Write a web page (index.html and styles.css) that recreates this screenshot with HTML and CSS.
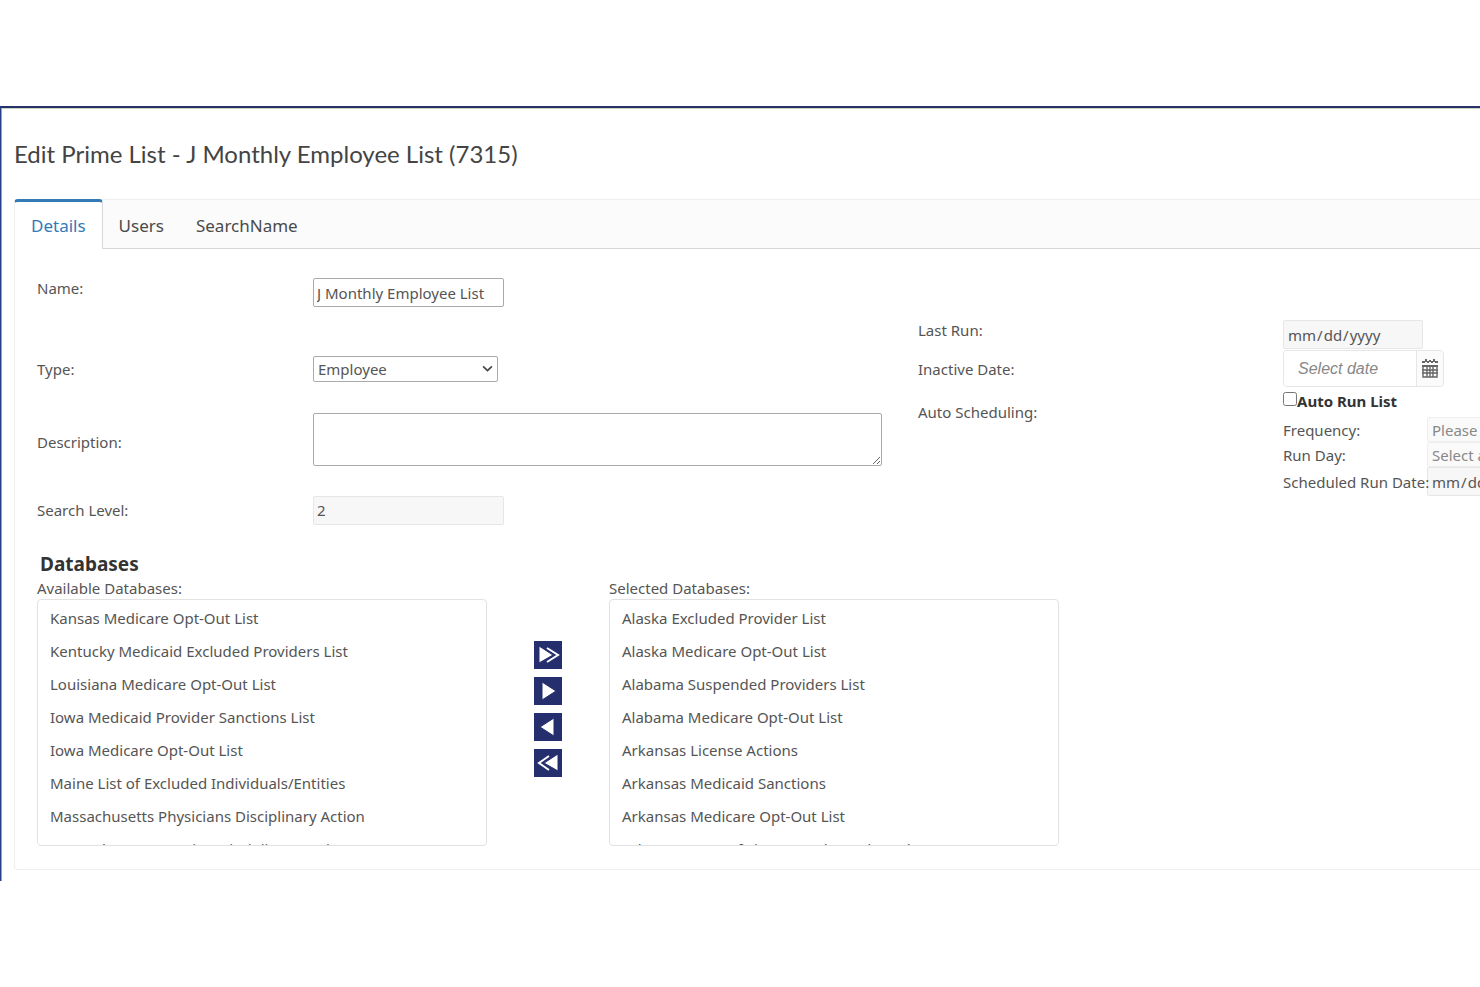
FILE: index.html
```
<!DOCTYPE html>
<html lang="en">
<head>
    <meta charset="UTF-8">
    <meta name="viewport" content="width=device-width, initial-scale=1.0">
    <title>Edit Prime List</title>
    <link rel="stylesheet" href="styles.css">
</head>
<body>

<main class="page">
    <h1>Edit Prime List - J Monthly Employee List (7315)</h1>

    <div class="panel">
        <nav class="tabs">
            <a href="#details" class="tab active">Details</a>
            <a href="#users" class="tab">Users</a>
            <a href="#searchname" class="tab">SearchName</a>
        </nav>

        <form class="details" id="details">
            <div class="form-columns">
                <!-- List details -->
                <div class="fields">
                    <label for="name">Name:</label>
                    <input type="text" id="name" class="field" value="J Monthly Employee List">

                    <label for="type">Type:</label>
                    <div class="select-wrap">
                        <select id="type">
                            <option>Employee</option>
                            <option>Vendor</option>
                        </select>
                        <svg class="chevron" viewBox="0 0 10 8"><path d="M1 2 L5 6 L9 2"/></svg>
                    </div>

                    <label for="description">Description:</label>
                    <textarea id="description"></textarea>

                    <label for="level">Search Level:</label>
                    <input type="text" id="level" class="field" value="2" disabled>
                </div>

                <!-- Scheduling -->
                <div class="schedule">
                    <label for="last-run">Last Run:</label>
                    <input type="date" id="last-run" class="date" disabled>

                    <label for="inactive" class="middle">Inactive Date:</label>
                    <div class="date-picker">
                        <input type="text" id="inactive" placeholder="Select date">
                        <button type="button" aria-label="Open calendar">
                            <svg viewBox="0 0 18 20">
                                <path class="rings" d="M1 3 H4 M6 3 H8 M10 3 H12 M14 3 H17 M5 0 V3 M9 1 V3 M13 0 V3"/>
                                <path class="cells" d="M2 7 V18 H16 V7 M1 11 H17 M1 14 H17 M6 7 V18 M9 7 V18 M12 7 V18"/>
                                <path class="bar" d="M1 7 H17"/>
                            </svg>
                        </button>
                    </div>

                    <span class="auto-label">Auto Scheduling:</span>
                    <div class="auto">
                        <div class="auto-check">
                            <input type="checkbox" id="auto-run"><label for="auto-run">Auto Run List</label>
                        </div>
                        <div class="auto-row">
                            <label for="frequency">Frequency:</label>
                            <select id="frequency" disabled>
                                <option>Please select</option>
                            </select>
                        </div>
                        <div class="auto-row">
                            <label for="run-day">Run Day:</label>
                            <select id="run-day" disabled>
                                <option>Select a day</option>
                            </select>
                        </div>
                        <div class="auto-row">
                            <label for="run-date">Scheduled Run Date:</label>
                            <input type="date" id="run-date" class="date" disabled>
                        </div>
                    </div>
                </div>
            </div>

            <h2>Databases</h2>
            <div class="databases">
                <div class="list">
                    <label for="available">Available Databases:</label>
                    <select id="available" multiple>
                        <option>Kansas Medicare Opt-Out List</option>
                        <option>Kentucky Medicaid Excluded Providers List</option>
                        <option>Louisiana Medicare Opt-Out List</option>
                        <option>Iowa Medicaid Provider Sanctions List</option>
                        <option>Iowa Medicare Opt-Out List</option>
                        <option>Maine List of Excluded Individuals/Entities</option>
                        <option>Massachusetts Physicians Disciplinary Action</option>
                        <option>Massachusetts Nursing Disciplinary Action</option>
                    </select>
                </div>

                <div class="move-buttons">
                    <button type="button" aria-label="Add all">
                        <svg viewBox="0 0 28 28"><path class="outline" d="M13 7 L24 14 L13 21"/><path class="solid" d="M5 5 L19 14 L5 22 Z"/></svg>
                    </button>
                    <button type="button" aria-label="Add">
                        <svg viewBox="0 0 28 28"><path class="solid" d="M8 5 L22 14 L8 23 Z"/></svg>
                    </button>
                    <button type="button" aria-label="Remove">
                        <svg viewBox="0 0 28 28"><path class="solid" d="M20 5 L6 14 L20 23 Z"/></svg>
                    </button>
                    <button type="button" aria-label="Remove all">
                        <svg viewBox="0 0 28 28"><path class="outline" d="M15 7 L5 14 L15 21"/><path class="solid" d="M24 5 L10 14 L24 22 Z"/></svg>
                    </button>
                </div>

                <div class="list">
                    <label for="selected">Selected Databases:</label>
                    <select id="selected" multiple>
                        <option>Alaska Excluded Provider List</option>
                        <option>Alaska Medicare Opt-Out List</option>
                        <option>Alabama Suspended Providers List</option>
                        <option>Alabama Medicare Opt-Out List</option>
                        <option>Arkansas License Actions</option>
                        <option>Arkansas Medicaid Sanctions</option>
                        <option>Arkansas Medicare Opt-Out List</option>
                        <option>Arkansas Dept of Finance Debarred Vendors</option>
                    </select>
                </div>
            </div>
        </form>
    </div>
</main>

</body>
</html>
```
FILE: styles.css
```
* {
    box-sizing: border-box;
}

body {
    margin: 0;
    padding-top: 106px;
    background-color: #fff;
    color: #555;
    font-family: "Noto Sans", "Open Sans", sans-serif;
    font-size: 15px;
    line-height: 20px;
}

input, select, textarea, button {
    margin: 0;
    font-family: inherit;
    font-size: inherit;
    color: inherit;
}

.page {
    border-top: 2px solid #27306b;
    border-left: 1px solid #27408b;
    box-shadow: inset 1px 0 0 #8fbc5a, inset 0 1px 0 #c5d6bb;
    padding: 30px 0 11px 13px;
    overflow: hidden;
}

h1 {
    margin: 0 0 29px;
    font-family: Lato, sans-serif;
    font-size: 24px;
    line-height: 32px;
    font-weight: 400;
    color: #444;
}

.panel {
    border: 1px solid #eee;
    border-right: none;
    border-radius: 4px 0 0 4px;
}

.tabs {
    display: flex;
    height: 50px;
    margin: -1px 0 0 -1px;
    background-color: #fbfbfb;
    border-top: 1px solid #eee;
    border-bottom: 1px solid #d8d8d8;
    border-radius: 4px 0 0 0;
}

.tab {
    padding: 15px 16px 0;
    font-size: 17px;
    line-height: 22px;
    color: #4a4a4a;
    text-decoration: none;
}

.tab.active {
    height: 50px;
    margin-top: -1px;
    padding-top: 13px;
    color: #337ab7;
    background-color: #fff;
    border-top: 3px solid #337ab7;
    border-left: 1px solid #eee;
    border-right: 1px solid #d8d8d8;
    border-radius: 4px 4px 0 0;
}

.details {
    padding: 29px 0 23px 22px;
}

.form-columns {
    display: flex;
    gap: 36px;
}

.fields {
    display: grid;
    grid-template-columns: 276px 569px;
    grid-template-rows: 64px 53px 93px 44px;
    align-items: center;
}

.fields > :nth-child(-n+2) {
    align-self: start;
}

.field, .date {
    height: 29px;
    padding: 0 3px;
    border: 1px solid #aaa;
    border-radius: 2px;
    background-color: #fff;
}

.field {
    width: 191px;
}

.field:disabled, .date:disabled {
    background-color: #f7f7f7;
    border-color: #e6e6e6;
    color: #555;
}

.select-wrap {
    position: relative;
    width: 185px;
}

.select-wrap select {
    display: block;
    width: 100%;
    height: 26px;
    padding: 0 4px;
    border: 1px solid #aaa;
    border-radius: 2px;
    background-color: #fff;
    appearance: none;
}

.chevron {
    position: absolute;
    top: 8px;
    right: 5px;
    width: 11px;
    height: 9px;
    fill: none;
    stroke: #444;
    stroke-width: 1.5;
    pointer-events: none;
}

textarea {
    width: 100%;
    height: 53px;
    margin-bottom: 4px;
    border: 1px solid #aaa;
    border-radius: 2px;
}

.schedule {
    display: grid;
    grid-template-columns: 365px 300px;
    grid-template-rows: 30px 37px auto;
    padding-top: 42px;
}

.schedule .middle {
    align-self: center;
}

.date {
    width: 140px;
}

.date::-webkit-calendar-picker-indicator {
    display: none;
}

.date-picker {
    display: flex;
    width: 161px;
    height: 37px;
    border: 1px solid #e6e6e6;
    border-radius: 4px;
}

.date-picker input {
    width: 133px;
    padding: 0 14px;
    border: none;
    border-right: 1px solid #e6e6e6;
    border-radius: 4px 0 0 4px;
    font-family: "Liberation Sans", Arial, sans-serif;
    font-size: 16px;
    font-style: italic;
}

.date-picker input::placeholder {
    color: #888;
}

.date-picker button {
    flex: 1;
    padding: 0;
    border: none;
    border-radius: 0 4px 4px 0;
    background-color: #fbfbfb;
}

.date-picker svg {
    display: block;
    width: 18px;
    height: 20px;
    margin: 0 auto;
    fill: none;
    stroke: #666;
}

.date-picker .rings {
    stroke-width: 2;
}

.date-picker .cells {
    stroke-width: 1.4;
}

.date-picker .bar {
    stroke-width: 2;
}

.auto-label {
    padding-top: 15px;
}

.auto {
    padding-top: 1px;
}

.auto-check {
    display: flex;
    align-items: center;
    height: 29px;
    padding-bottom: 4px;
    font-weight: 700;
    color: #333;
}

.auto-check input {
    width: 14px;
    height: 14px;
    margin-bottom: 4px;
}

.auto-row {
    display: flex;
    align-items: center;
}

.auto-row label {
    position: relative;
    width: 144px;
    white-space: nowrap;
}

.auto-row select {
    width: 140px;
    height: 25px;
    padding: 0 4px;
    border: 1px solid #eee;
    border-radius: 2px;
    background-color: #fafafa;
    color: #888;
    opacity: 1;
    appearance: none;
}

h2 {
    margin: 20px 0 2px 3px;
    font-size: 19px;
    line-height: 24px;
    font-weight: 700;
    color: #333;
}

.databases {
    display: flex;
    gap: 47px;
}

.list {
    width: 450px;
}

.list label {
    display: block;
    margin-bottom: 1px;
}

.list select {
    display: block;
    width: 100%;
    height: 247px;
    padding: 2px 0 0;
    border: 1px solid #e2e2e2;
    border-radius: 4px;
    background-color: #fff;
    overflow: hidden;
    scrollbar-width: none;
}

.list option {
    min-height: 33px;
    padding: 6px 12px 7px;
    line-height: 20px;
}

.move-buttons {
    display: flex;
    flex-direction: column;
    gap: 8px;
    padding-top: 63px;
}

.move-buttons button {
    width: 28px;
    height: 28px;
    padding: 0;
    border: none;
    background-color: #252f6d;
}

.move-buttons svg {
    display: block;
    width: 28px;
    height: 28px;
}

.solid {
    fill: #fff;
    stroke: #252f6d;
    stroke-width: 1;
}

.outline {
    fill: none;
    stroke: #fff;
    stroke-width: 2;
}
```
